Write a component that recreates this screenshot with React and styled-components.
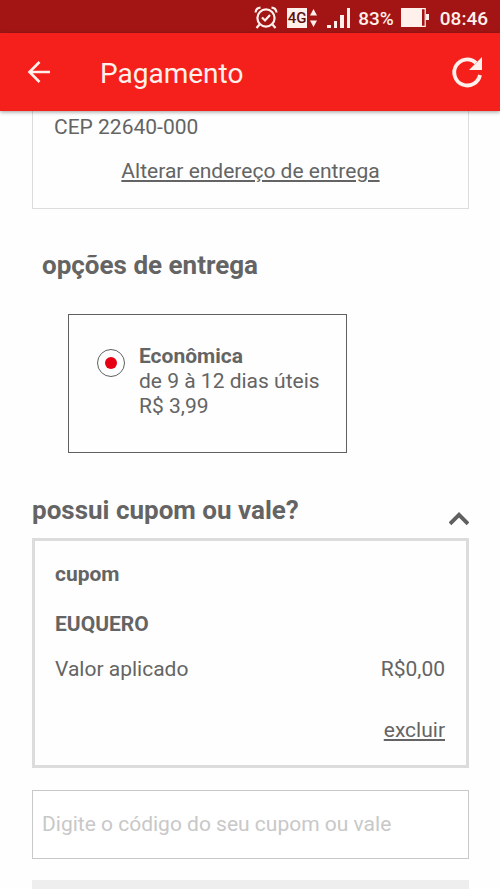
import React, { useState } from 'react'
import styled, { createGlobalStyle } from 'styled-components'

const GlobalStyle = createGlobalStyle`
    * {
        box-sizing: border-box;
    }
    body {
        margin: 0;
        background-color: #fefefe;
        color: #646464;
        font-family: Roboto, "Liberation Sans", sans-serif;
        font-size: 21px;
        line-height: 25px;
    }
    h1, h2, h3, p {
        margin: 0;
    }
    button, input {
        font: inherit;
        color: inherit;
    }`

const Screen = styled.div`
    height: 100vh;
    display: flex;
    flex-direction: column;`

const StatusBar = styled.div`
    height: 33px;
    flex-shrink: 0;
    padding: 3px 12px 0 0;
    display: flex;
    align-items: center;
    justify-content: flex-end;
    gap: 7px;
    background-color: #a31515;
    color: #fff0ec;
    font-size: 19px;
    font-weight: 500;`

const Network = styled.div`
    margin-left: 2px;
    display: flex;
    align-items: center;
    gap: 2px;`

const NetworkBadge = styled.span`
    width: 20px;
    height: 20px;
    background-color: #fff0ec;
    color: #5c1010;
    font-size: 15px;
    line-height: 20px;
    text-align: center;`

const Clock = styled.span`
    margin-left: 4px;`

const Header = styled.header`
    height: 78px;
    flex-shrink: 0;
    padding: 0 15px 0 26px;
    display: flex;
    align-items: center;
    background-color: #f5201b;
    color: #fff0ec;
    box-shadow: 0 1px 4px rgba(0, 0, 0, 0.4);
    z-index: 1;`

const IconButton = styled.button`
    border: none;
    padding: 0;
    display: flex;
    background: none;
    cursor: pointer;`

const Title = styled.h1`
    flex: 1;
    margin-left: 48px;
    padding-top: 3px;
    font-size: 28px;
    font-weight: 400;
    line-height: 32px;`

const Content = styled.main`
    flex: 1;
    min-height: 0;
    padding: 0 31px 24px 32px;
    overflow-y: auto;
    scrollbar-width: none;`

const AddressCard = styled.section`
    padding: 4px 21px 24px;
    border: 1px solid #dcdcdc;
    border-top: none;
    display: flex;
    flex-direction: column;
    gap: 19px;`

const Link = styled.a`
    align-self: ${props => props.$align};
    color: inherit;
    text-decoration: underline;`

const SectionTitle = styled.h2`
    font-size: 26px;
    font-weight: 700;
    line-height: 32px;`

const Delivery = styled.section`
    padding: 40px 10px 41px;`

const DeliveryOption = styled.label`
    width: fit-content;
    margin: 33px 0 0 26px;
    padding: 29px 26px 33px 28px;
    border: 1px solid #606060;
    display: flex;
    gap: 14px;
    cursor: pointer;`

const Radio = styled.input`
    appearance: none;
    width: 28px;
    height: 28px;
    margin: 5px 0 0;
    border: 1px solid #606060;
    border-radius: 50%;
    display: grid;
    place-items: center;
    &:checked::before {
        content: "";
        width: 12px;
        height: 12px;
        border-radius: 50%;
        background-color: #e60014;
    }`

const Strong = styled.strong`
    font-weight: 700;`

const CouponHeader = styled.div`
    padding-bottom: 12px;
    display: flex;
    justify-content: space-between;
    align-items: flex-end;`

const CouponCard = styled.div`
    padding: 21px 21px 22px 20px;
    border: 3px solid #dcdcdc;
    display: flex;
    flex-direction: column;`

const CouponType = styled.h3`
    margin-bottom: 25px;
    font-size: 21px;
    font-weight: 700;`

const CouponValue = styled.div`
    margin: 20px 0 36px;
    display: flex;
    justify-content: space-between;`

const CouponInput = styled.input`
    display: block;
    width: 100%;
    height: 69px;
    margin: 22px 0 21px;
    padding: 0 9px 2px;
    border: 1px solid #c8c8c8;
    border-radius: 0;
    background-color: #fff;
    &::placeholder {
        color: #c8c8c8;
        opacity: 1;
    }`

const ApplyButton = styled.button`
    width: 100%;
    height: 68px;
    border: none;
    background-color: #eeeeee;
    cursor: pointer;`

const AlarmIcon = () => (
    <svg width="24" height="24" viewBox="0 0 24 24" fill="none" stroke="currentColor" strokeWidth="2.2">
        <circle cx="12" cy="12" r="8.6" />
        <path d="M8 11.5l3 3 5-5.5M1.5 6.5Q2 2 6.5 1.7M22.5 6.5Q22 2 17.5 1.7M5.5 18.5l-3 3.5M18.5 18.5l3 3.5" />
    </svg>
)

const DataArrows = () => (
    <svg width="9" height="20" viewBox="0 0 9 20" fill="currentColor">
        <path d="M4.5 1L8 7.5H1zM4.5 19L1 12.5h7z" />
    </svg>
)

const SignalIcon = () => (
    <svg width="26" height="22" viewBox="0 0 26 22" fill="currentColor">
        <path d="M2 18h4v3H2zM9 14h3v7H9zM15 8h4v13h-4zM22 1h3v20h-3z" />
    </svg>
)

const BatteryIcon = () => (
    <svg width="28" height="20" viewBox="0 0 28 20" fill="currentColor">
        <path d="M0 0h21v19H0zM25 6h3v6h-3z" />
        <path d="M21 .6h3.2v17.8H21" fill="none" stroke="currentColor" strokeWidth="1.2" />
    </svg>
)

const BackIcon = () => (
    <svg width="26" height="24" viewBox="0 0 26 24" fill="none" stroke="currentColor" strokeWidth="2.6">
        <path d="M24 12H4M13.5 2L3.5 12l10 10" />
    </svg>
)

const RefreshIcon = () => (
    <svg width="36" height="36" viewBox="0 0 36 36">
        <path d="M31 21A13 13 0 1 1 27 8.8" fill="none" stroke="currentColor" strokeWidth="3.8" />
        <path d="M33 3v13H20z" fill="currentColor" />
    </svg>
)

const ChevronIcon = ({ open }) => (
    <svg width="20" height="14" viewBox="0 0 20 14" fill="none" stroke="#606060" strokeWidth="3.8">
        <path d={open ? 'M1 11.8L10 2.8l9 9' : 'M1 2.2l9 9 9-9'} />
    </svg>
)

function App() {
  const [open, setOpen] = useState(true)
  const [code, setCode] = useState('')

  return (
    <Screen>
        <GlobalStyle />
        <StatusBar>
            <AlarmIcon />
            <Network>
                <NetworkBadge>4G</NetworkBadge>
                <DataArrows />
            </Network>
            <SignalIcon />
            <span>83%</span>
            <BatteryIcon />
            <Clock>08:46</Clock>
        </StatusBar>
        <Header>
            <IconButton aria-label="Voltar"><BackIcon /></IconButton>
            <Title>Pagamento</Title>
            <IconButton aria-label="Atualizar"><RefreshIcon /></IconButton>
        </Header>
        <Content>
            <AddressCard>
                <p>CEP 22640-000</p>
                <Link href="#endereco" $align="center">Alterar endereço de entrega</Link>
            </AddressCard>
            <Delivery>
                <SectionTitle>opções de entrega</SectionTitle>
                <DeliveryOption>
                    <Radio type="radio" name="entrega" defaultChecked />
                    <div>
                        <Strong>Econômica</Strong>
                        <p>de 9 à 12 dias úteis</p>
                        <p>R$ 3,99</p>
                    </div>
                </DeliveryOption>
            </Delivery>
            <section>
                <CouponHeader>
                    <SectionTitle>possui cupom ou vale?</SectionTitle>
                    <IconButton aria-label="Cupom ou vale" aria-expanded={open} onClick={() => setOpen(!open)}>
                        <ChevronIcon open={open} />
                    </IconButton>
                </CouponHeader>
                {open && (
                    <CouponCard>
                        <CouponType>cupom</CouponType>
                        <Strong>EUQUERO</Strong>
                        <CouponValue>
                            <span>Valor aplicado</span>
                            <span>R$0,00</span>
                        </CouponValue>
                        <Link href="#excluir" $align="flex-end">excluir</Link>
                    </CouponCard>
                )}
                <CouponInput
                    type="text"
                    aria-label="Código do cupom ou vale"
                    placeholder="Digite o código do seu cupom ou vale"
                    value={code}
                    onChange={e => setCode(e.target.value)}
                />
                <ApplyButton aria-label="Aplicar" />
            </section>
        </Content>
    </Screen>
  )
}

export default App
